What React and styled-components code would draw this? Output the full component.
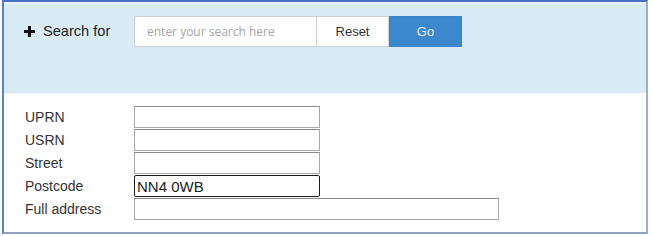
import React, { useState } from "react";
import styled, { createGlobalStyle } from "styled-components";

const GlobalStyle = createGlobalStyle`
  html, body {
    margin: 0;
    padding: 0;
    background: #ffffff;
  }
`;

const fields = [
  { label: "UPRN", name: "uprn", wide: false },
  { label: "USRN", name: "usrn", wide: false },
  { label: "Street", name: "street", wide: false },
  { label: "Postcode", name: "postcode", wide: false, focused: true },
  { label: "Full address", name: "fullAddress", wide: true },
];

const PlusIcon = () => (
  <svg width="11" height="11" viewBox="0 0 11 11">
    <path d="M4 0h3v4h4v3H7v4H4V7H0V4h4z" fill="#111" />
  </svg>
);

const App = () => {
  const [values, setValues] = useState({
    uprn: "",
    usrn: "",
    street: "",
    postcode: "NN4 0WB",
    fullAddress: "",
  });

  const onChange = (e) => {
    const { name, value } = e.target;
    setValues((prev) => ({ ...prev, [name]: value }));
  };

  return (
    <>
      <GlobalStyle />
      <SFrame>
        <SHeader>
          <SSearchLabel>
            <PlusIcon />
            Search for
          </SSearchLabel>
          <SSearchGroup>
            <SSearchInput type="text" placeholder="enter your search here" />
            <SButton type="button">Reset</SButton>
            <SButton type="button" primary>
              Go
            </SButton>
          </SSearchGroup>
        </SHeader>
        <SForm>
          {fields.map((field) => (
            <SRow key={field.name}>
              <SLabel htmlFor={field.name}>{field.label}</SLabel>
              <SInput
                id={field.name}
                name={field.name}
                value={values[field.name]}
                onChange={onChange}
                $wide={field.wide}
                $focused={field.focused}
              />
            </SRow>
          ))}
        </SForm>
      </SFrame>
    </>
  );
};

export default App;

const SFrame = styled.div`
  box-sizing: border-box;
  margin-left: 2px;
  width: 646px;
  height: 234px;
  border-top: 2px solid #4a6fc4;
  border-left: 2px solid #5b7fd0;
  border-right: 2px solid #9cb0cc;
  border-bottom: 2px solid #8ea2bf;
  display: flex;
  flex-direction: column;
  font-family: "Liberation Sans", Arial, sans-serif;
`;

const SHeader = styled.div`
  box-sizing: border-box;
  height: 91px;
  padding: 12px 0 0 20px;
  background: #d9ecf6;
  border-top: 2px solid #e8f5fb;
  border-bottom: 1px solid #d3e8f2;
  display: flex;
  align-items: flex-start;
`;

const SSearchLabel = styled.div`
  width: 110px;
  height: 30px;
  display: flex;
  align-items: center;
  gap: 8px;
  font-size: 14.6px;
  color: #222;
`;

const SSearchGroup = styled.div`
  display: flex;
`;

const SSearchInput = styled.input`
  box-sizing: border-box;
  width: 182px;
  height: 31px;
  padding: 0 12px;
  border: 1px solid #cfcfcf;
  border-right: none;
  background: #fff;
  font-family: "Open Sans", sans-serif;
  font-size: 12px;
  outline: none;
  &::placeholder {
    color: #a6a6a6;
  }
`;

const SButton = styled.button`
  box-sizing: border-box;
  width: 73px;
  height: 31px;
  border: 1px solid ${(p) => (p.primary ? "#3b84c6" : "#d0d0d0")};
  background: ${(p) => (p.primary ? "#3d88cc" : "#ffffff")};
  color: ${(p) => (p.primary ? "#eef4fb" : "#333")};
  font-family: "Liberation Sans", Arial, sans-serif;
  font-size: 13px;
  padding: 0;
  cursor: pointer;
`;

const SForm = styled.div`
  flex: 1;
  padding: 13px 0 0 21px;
  display: flex;
  flex-direction: column;
  gap: 1px;
`;

const SRow = styled.div`
  display: flex;
  align-items: center;
  height: 22px;
`;

const SLabel = styled.label`
  width: 109px;
  font-size: 14px;
  color: #333;
`;

const SInput = styled.input`
  box-sizing: border-box;
  width: ${(p) => (p.$wide ? "365px" : "186px")};
  height: 22px;
  padding: 0 2px;
  border: 1px solid ${(p) => (p.$focused ? "#1a1a1a" : "#a9a9a9")};
  border-top-color: ${(p) => (p.$focused ? "#1a1a1a" : "#8a8a8a")};
  border-radius: ${(p) => (p.$focused ? "2px" : "0")};
  background: #fff;
  font-family: "Liberation Sans", Arial, sans-serif;
  font-size: 15px;
  color: #222;
  outline: none;
`;
